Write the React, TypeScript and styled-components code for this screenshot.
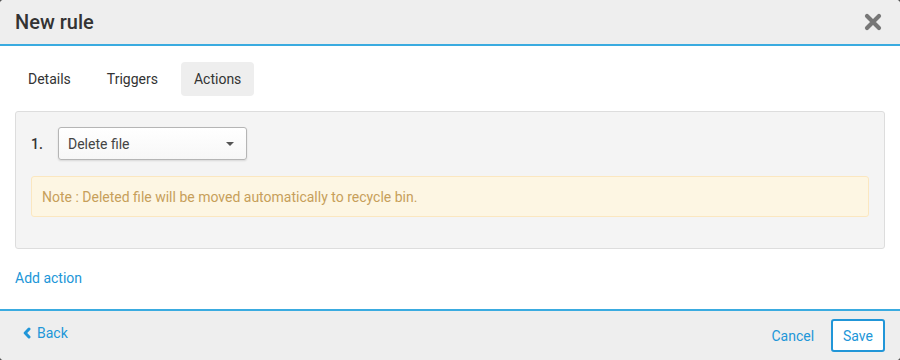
import React from "react"
import styled, { createGlobalStyle } from "styled-components"

const GlobalStyle = createGlobalStyle`
  html, body {
    margin: 0;
    padding: 0;
    background: #555;
  }
  body {
    font-family: Roboto, "Liberation Sans", Arial, sans-serif;
    color: #333;
  }
`

const Modal = styled.div`
  width: 900px;
  height: 360px;
  background: #fff;
  border-radius: 4px;
  overflow: hidden;
  display: flex;
  flex-direction: column;
`

const Header = styled.div`
  height: 44px;
  flex-shrink: 0;
  background: #eeeeee;
  border-bottom: 2px solid #3aabe0;
  display: flex;
  align-items: center;
  justify-content: space-between;
  padding: 0 18px 0 15px;
`

const Title = styled.h1`
  margin: 0;
  font-size: 20px;
  font-weight: 500;
  color: #333;
`

const CloseButton = styled.button`
  border: 0;
  background: none;
  padding: 0;
  display: flex;
  cursor: pointer;
`

const Body = styled.div`
  flex: 1;
  padding: 16px 15px 0;
`

const Tabs = styled.div`
  display: flex;
  gap: 2px;
  margin-bottom: 15px;
`

const Tab = styled.button<{ $active?: boolean }>`
  border: 0;
  border-radius: 4px;
  height: 34px;
  padding: 0 13px;
  font-family: inherit;
  font-size: 14px;
  color: #333;
  background: ${(p) => (p.$active ? "#eeeeee" : "transparent")};
  cursor: pointer;
  & + & {
    margin-left: 8px;
  }
`

const Panel = styled.div`
  background: #f4f4f4;
  border: 1px solid #dddddd;
  border-radius: 3px;
  padding: 15px 15px 31px;
`

const ActionRow = styled.div`
  display: flex;
  align-items: center;
  gap: 13px;
`

const Index = styled.span`
  font-size: 14px;
  font-weight: 500;
  color: #333;
  width: 14px;
`

const Select = styled.div`
  width: 189px;
  height: 33px;
  box-sizing: border-box;
  border: 1px solid #b5b5b5;
  border-radius: 3px;
  background: linear-gradient(#ffffff, #f7f7f7);
  box-shadow: 0 1px 2px rgba(0, 0, 0, 0.12);
  display: flex;
  align-items: center;
  justify-content: space-between;
  padding: 0 12px 0 9px;
  font-size: 14px;
  color: #444;
`

const Caret = styled.span`
  width: 0;
  height: 0;
  border-left: 4px solid transparent;
  border-right: 4px solid transparent;
  border-top: 4px solid #555;
`

const Note = styled.div`
  margin-top: 16px;
  height: 41px;
  box-sizing: border-box;
  background: #fdf6e3;
  border: 1px solid #fbe7c0;
  border-radius: 3px;
  display: flex;
  align-items: center;
  padding: 0 10px;
  font-size: 14px;
  color: #c79f5a;
`

const LinkButton = styled.button<{ $raised?: boolean }>`
  border: 0;
  background: none;
  padding: 0 0 ${(p) => (p.$raised ? "6px" : "0")};
  font-family: inherit;
  font-size: 14px;
  color: #2196d8;
  cursor: pointer;
  display: inline-flex;
  align-items: center;
  gap: 6px;
`

const AddRow = styled.div`
  margin-top: 19px;
`

const Footer = styled.div`
  height: 49px;
  flex-shrink: 0;
  background: #eeeeee;
  border-top: 2px solid #3aabe0;
  display: flex;
  align-items: center;
  justify-content: space-between;
  padding: 0 15px 0 23px;
`

const FooterActions = styled.div`
  display: flex;
  align-items: center;
  gap: 17px;
`

const SaveButton = styled.button`
  height: 33px;
  padding: 0 10px;
  border: 2px solid #2196d8;
  border-radius: 3px;
  background: #fff;
  font-family: inherit;
  font-size: 14px;
  color: #2196d8;
  cursor: pointer;
`

const App = () => {
  return (
    <>
      <GlobalStyle />
      <Modal>
        <Header>
          <Title>New rule</Title>
          <CloseButton aria-label="Close">
            <svg width="18" height="18" viewBox="0 0 18 18">
              <path
                d="M3 3 L15 15 M15 3 L3 15"
                stroke="#777"
                strokeWidth="4.2"
                strokeLinecap="round"
              />
            </svg>
          </CloseButton>
        </Header>

        <Body>
          <Tabs>
            <Tab>Details</Tab>
            <Tab>Triggers</Tab>
            <Tab $active>Actions</Tab>
          </Tabs>

          <Panel>
            <ActionRow>
              <Index>1.</Index>
              <Select>
                <span>Delete file</span>
                <Caret />
              </Select>
            </ActionRow>
            <Note>Note : Deleted file will be moved automatically to recycle bin.</Note>
          </Panel>

          <AddRow>
            <LinkButton>Add action</LinkButton>
          </AddRow>
        </Body>

        <Footer>
          <LinkButton $raised>
            <svg width="8" height="12" viewBox="0 0 8 12">
              <path
                d="M6 2 L2.2 6 L6 10"
                fill="none"
                stroke="#2196d8"
                strokeWidth="3"
                strokeLinecap="round"
                strokeLinejoin="round"
              />
            </svg>
            Back
          </LinkButton>
          <FooterActions>
            <LinkButton>Cancel</LinkButton>
            <SaveButton>Save</SaveButton>
          </FooterActions>
        </Footer>
      </Modal>
    </>
  )
}

export default App
